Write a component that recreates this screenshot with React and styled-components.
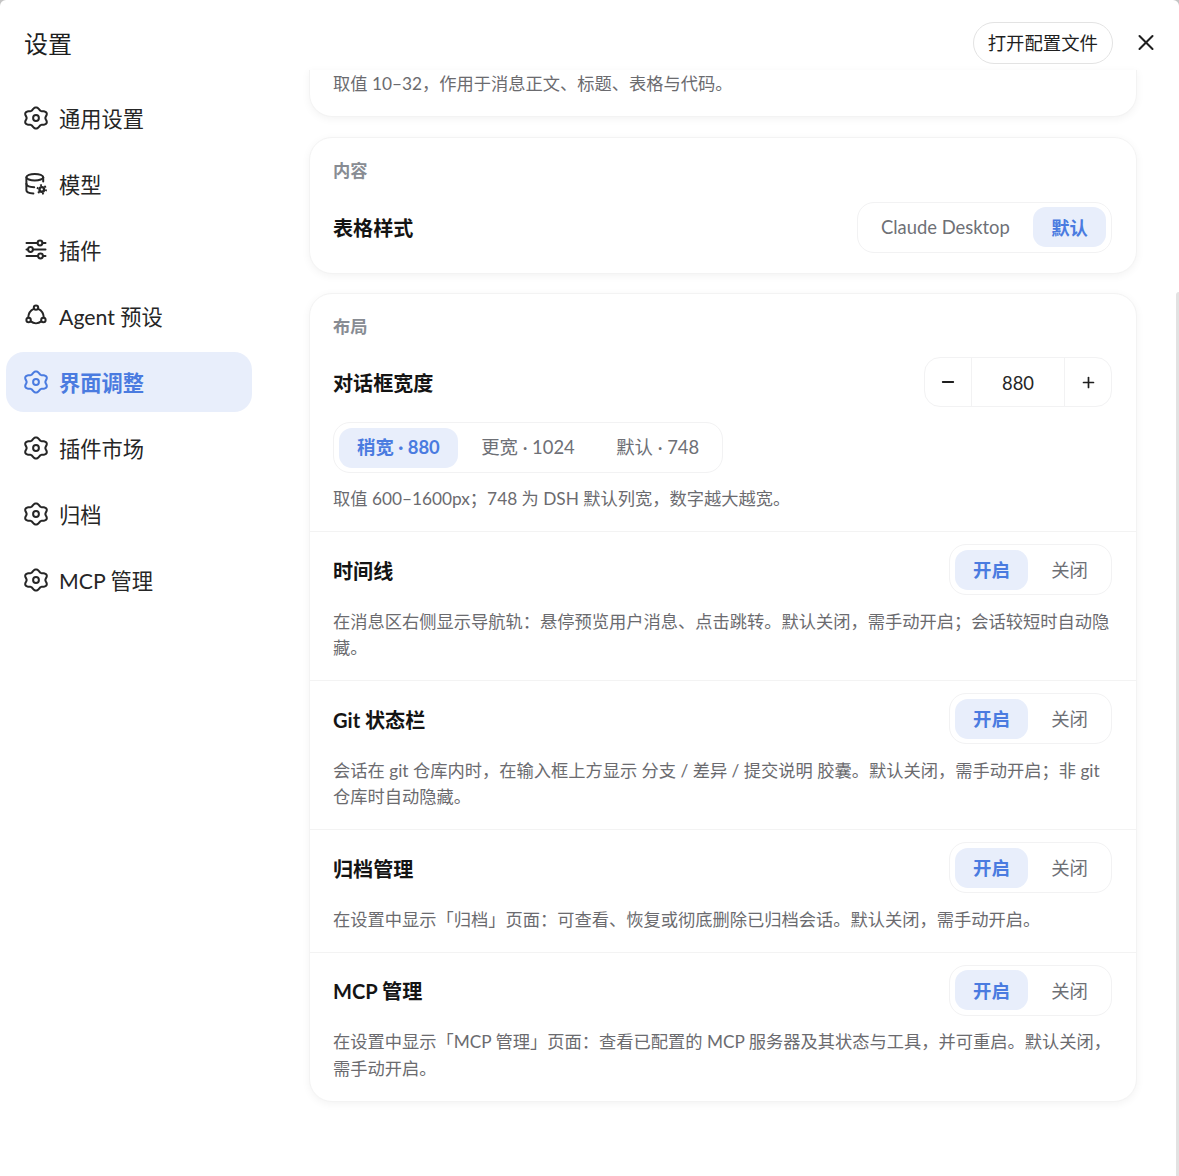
import React from 'react';
import styled, { createGlobalStyle } from 'styled-components';
import { Minus, Plus, X } from 'lucide-react';

const GlobalStyle = createGlobalStyle`
  html, body {
    margin: 0;
    padding: 0;
    background: #c4c4c4;
  }
  * {
    box-sizing: border-box;
  }
`;

const Shell = styled.div`
  position: relative;
  display: flex;
  width: 1179px;
  height: 1176px;
  overflow: hidden;
  background: #fff;
  border-radius: 6px 6px 0 0;
  color: #1f1f1f;
  font-family: Lato, "Noto Sans CJK SC", sans-serif;
`;

const Sidebar = styled.aside`
  flex: 0 0 258px;
  display: flex;
  flex-direction: column;
`;

const Title = styled.h1`
  margin: 0;
  height: 88px;
  padding-left: 24px;
  font-size: 24px;
  font-weight: 400;
  line-height: 88px;
`;

const Nav = styled.nav`
  display: flex;
  flex-direction: column;
  gap: 6px;
  padding: 0 6px;
`;

const NavItem = styled.div`
  display: flex;
  align-items: center;
  gap: 11px;
  height: 60px;
  padding: 0 18px;
  border-radius: 18px;
  font-size: 21.25px;
  font-weight: ${props => (props.$active ? 700 : 400)};
  color: ${props => (props.$active ? '#4a7be0' : '#262626')};
  background: ${props => (props.$active ? '#e8eefb' : 'transparent')};
`;

const NavLabel = styled.span`
  padding-bottom: 2px;
`;

const Main = styled.main`
  flex: 1;
  display: flex;
  flex-direction: column;
  min-width: 0;
`;

const Header = styled.header`
  flex: 0 0 70px;
  display: flex;
  align-items: flex-start;
  justify-content: flex-end;
  gap: 20px;
  padding: 22px 20px 0 0;
`;

const ConfigButton = styled.button`
  height: 42px;
  padding: 0 14px 3px;
  border: 1px solid #e3e3e3;
  border-radius: 21px;
  background: #fff;
  color: #1f1f1f;
  font: inherit;
  font-size: 18.4px;
`;

const CloseButton = styled.button`
  display: flex;
  align-items: center;
  justify-content: center;
  width: 26px;
  height: 41px;
  padding: 0;
  border: 0;
  background: none;
  color: #1f1f1f;
`;

const Content = styled.div`
  display: flex;
  flex-direction: column;
  gap: 19.6px;
  padding: 0 42px 0 51px;
`;

const Card = styled.section`
  background: #fff;
  border: 1px solid #f3f3f3;
  border-radius: 23px;
  box-shadow: 0 2px 9px rgba(0, 0, 0, 0.05);
`;

const ClippedCard = styled(Card)`
  height: 47px;
  border-top: 0;
  border-radius: 0 0 23px 23px;
  padding: 1px 24px 0 23px;
`;

const SectionLabel = styled.div`
  padding: 20px 23px 0;
  margin-bottom: -1px;
  font-size: 17.25px;
  font-weight: 700;
  line-height: 26px;
  color: #888c93;
`;

const Row = styled.div`
  padding: ${props => props.$padding || '12px 24px 18.7px 23px'};
  border-top: ${props => (props.$divided ? '1px solid #f3f3f3' : '0')};
`;

const RowHead = styled.div`
  display: flex;
  align-items: center;
  justify-content: space-between;
`;

const RowTitle = styled.div`
  padding-top: 1px;
  font-size: 20.1px;
  font-weight: 700;
  color: #141414;
`;

const Description = styled.p`
  margin: ${props => props.$margin || '13.5px 0 0'};
  font-size: 17.25px;
  line-height: 26.4px;
  color: #6b6b6f;
`;

const Segmented = styled.div`
  display: inline-flex;
  gap: 4.6px;
  height: 51px;
  padding: 4.6px;
  border: 1px solid #f2f2f3;
  border-radius: 17px;
  background: #fff;
`;

const SegmentOption = styled.div`
  display: flex;
  align-items: center;
  padding: 0 18.4px 1px;
  border-radius: 13px;
  font-size: 18.4px;
  white-space: nowrap;
  font-weight: ${props => (props.$active ? 700 : 400)};
  color: ${props => (props.$active ? '#4a7be0' : '#6e7076')};
  background: ${props => (props.$active ? '#e8eefb' : 'transparent')};
`;

const WidthPresets = styled.div`
  margin-top: 15px;
  line-height: 0;
`;

const Stepper = styled.div`
  display: flex;
  width: 188px;
  height: 50px;
  border: 1px solid #f2f2f3;
  border-radius: 16px;
`;

const StepButton = styled.div`
  flex: 0 0 46px;
  display: flex;
  align-items: center;
  justify-content: center;
  color: #1f1f1f;
`;

const StepValue = styled.div`
  flex: 1;
  display: flex;
  align-items: center;
  justify-content: center;
  padding-top: 1px;
  border-left: 1px solid #f2f2f3;
  border-right: 1px solid #f2f2f3;
  font-size: 18.4px;
  color: #262626;
`;

const ScrollThumb = styled.div`
  position: absolute;
  top: 292px;
  right: 0;
  bottom: 0;
  width: 3px;
  border-radius: 3px 0 0 0;
  background: #e2e2e2;
`;

const IconBox = styled.svg`
  flex: 0 0 24px;
  width: 24px;
  height: 24px;
  fill: none;
  stroke: currentColor;
  stroke-width: 2;
  stroke-linecap: round;
  stroke-linejoin: round;
`;

// six soft lobes, slightly wider than tall like the reference glyph
const gearPath = (() => {
  const points = [];
  for (let i = 0; i < 72; i += 1) {
    const a = (i / 72) * Math.PI * 2;
    const r = 9.4 + 1.2 * Math.cos(6 * a);
    const x = 12 + 1.14 * r * Math.sin(a);
    const y = 12 - r * Math.cos(a);
    points.push(`${x.toFixed(2)} ${y.toFixed(2)}`);
  }
  return `M${points.join('L')}Z`;
})();

const GearIcon = () => (
  <IconBox viewBox="0 0 24 24">
    <path d={gearPath} />
    <circle cx="12" cy="12" r="2.9" />
  </IconBox>
);

const ModelIcon = () => (
  <IconBox viewBox="0 0 24 24">
    <ellipse cx="10.8" cy="5.2" rx="8.4" ry="3.2" />
    <path d="M2.4 5.2v13c0 1.8 3 3 7 3.2" />
    <path d="M2.4 11.8c0 1.9 3.4 3.3 7.8 3.4" />
    <path d="M19.2 5.2v4.4" />
    <circle cx="17.8" cy="17.4" r="2.3" strokeWidth="2.4" />
    <circle cx="17.8" cy="17.4" r="4.3" strokeWidth="1.8" strokeDasharray="1.9 2.6" strokeLinecap="butt" />
  </IconBox>
);

const SliderIcon = () => (
  <IconBox viewBox="0 0 24 24">
    <path d="M2.5 5h11M18.5 5h3" />
    <circle cx="16" cy="5" r="2.4" />
    <path d="M2.5 11.5h1.600M9 11.500h12.500" />
    <circle cx="6.500" cy="11.500" r="2.400" />
    <path d="M2.500 18h11.500M19 18h2.500" />
    <circle cx="16.500" cy="18" r="2.400" />
  </IconBox>
);

const AgentIcon = () => (
  <IconBox viewBox="0 0 24 24">
    <circle cx="12" cy="3.600" r="2.200" />
    <circle cx="4.600" cy="16" r="2.200" />
    <circle cx="19.400" cy="16" r="2.200" />
    <path d="M9.800 4.800C6.600 6.200 4.400 9.400 4.200 13.600" />
    <path d="M14.200 4.800c3.200 1.400 5.400 4.600 5.600 8.800" />
    <path d="M6.800 17.400c3 2.400 7.400 2.400 10.400 0" />
  </IconBox>
);

const navItems = [
  { label: '通用设置', Icon: GearIcon },
  { label: '模型', Icon: ModelIcon },
  { label: '插件', Icon: SliderIcon },
  { label: 'Agent 预设', Icon: AgentIcon },
  { label: '界面调整', Icon: GearIcon, active: true },
  { label: '插件市场', Icon: GearIcon },
  { label: '归档', Icon: GearIcon },
  { label: 'MCP 管理', Icon: GearIcon },
];

const toggleRows = [
  {
    title: '时间线',
    text: '在消息区右侧显示导航轨：悬停预览用户消息、点击跳转。默认关闭，需手动开启；会话较短时自动隐藏。',
  },
  {
    title: 'Git 状态栏',
    text: '会话在 git 仓库内时，在输入框上方显示 分支 / 差异 / 提交说明 胶囊。默认关闭，需手动开启；非 git 仓库时自动隐藏。',
  },
  {
    title: '归档管理',
    text: '在设置中显示「归档」页面：可查看、恢复或彻底删除已归档会话。默认关闭，需手动开启。',
  },
  {
    title: 'MCP 管理',
    text: '在设置中显示「MCP 管理」页面：查看已配置的 MCP 服务器及其状态与工具，并可重启。默认关闭，需手动开启。',
  },
];

const SegmentGroup = ({ options, active }) => (
  <Segmented>
    {options.map(option => (
      <SegmentOption key={option} $active={option === active}>
        {option}
      </SegmentOption>
    ))}
  </Segmented>
);

export default function App() {
  return (
    <>
      <GlobalStyle />
      <Shell>
        <Sidebar>
          <Title>设置</Title>
          <Nav>
            {navItems.map(({ label, Icon, active }) => (
              <NavItem key={label} $active={active}>
                <Icon />
                <NavLabel>{label}</NavLabel>
              </NavItem>
            ))}
          </Nav>
        </Sidebar>
        <Main>
          <Header>
            <ConfigButton>打开配置文件</ConfigButton>
            <CloseButton aria-label="关闭">
              <X size={27} strokeWidth={1.9} />
            </CloseButton>
          </Header>
          <Content>
            <ClippedCard>
              <Description $margin="0">取值 10–32，作用于消息正文、标题、表格与代码。</Description>
            </ClippedCard>
            <Card>
              <SectionLabel>内容</SectionLabel>
              <Row $padding="19px 24px 20px 23px">
                <RowHead>
                  <RowTitle>表格样式</RowTitle>
                  <SegmentGroup options={['Claude Desktop', '默认']} active="默认" />
                </RowHead>
              </Row>
            </Card>
            <Card>
              <SectionLabel>布局</SectionLabel>
              <Row $padding="18px 24px 18.7px 23px">
                <RowHead>
                  <RowTitle>对话框宽度</RowTitle>
                  <Stepper>
                    <StepButton>
                      <Minus size={18} strokeWidth={2.4} />
                    </StepButton>
                    <StepValue>880</StepValue>
                    <StepButton>
                      <Plus size={17} strokeWidth={2.4} />
                    </StepButton>
                  </Stepper>
                </RowHead>
                <WidthPresets>
                  <SegmentGroup options={['稍宽 · 880', '更宽 · 1024', '默认 · 748']} active="稍宽 · 880" />
                </WidthPresets>
                <Description $margin="13px 0 0">取值 600–1600px；748 为 DSH 默认列宽，数字越大越宽。</Description>
              </Row>
              {toggleRows.map(row => (
                <Row key={row.title} $divided>
                  <RowHead>
                    <RowTitle>{row.title}</RowTitle>
                    <SegmentGroup options={['开启', '关闭']} active="开启" />
                  </RowHead>
                  <Description>{row.text}</Description>
                </Row>
              ))}
            </Card>
          </Content>
        </Main>
        <ScrollThumb />
      </Shell>
    </>
  );
}
